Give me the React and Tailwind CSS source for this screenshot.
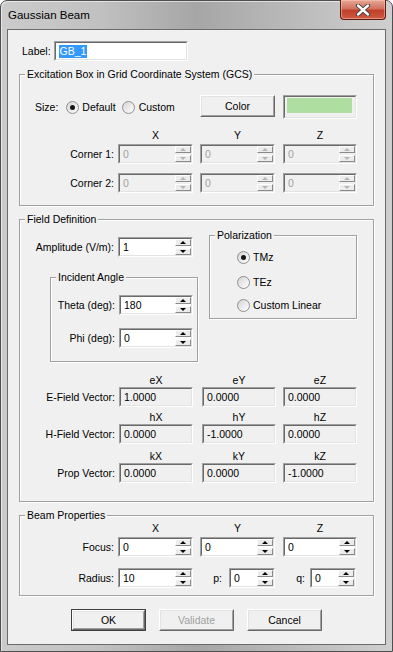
const outerSunk = 'border border-t-[#a0a0a0] border-l-[#a0a0a0] border-r-white border-b-white';
const innerSunk = 'border border-t-[#696969] border-l-[#696969] border-r-[#e3e3e3] border-b-[#e3e3e3]';
const raisedOuter = 'border border-t-white border-l-white border-r-[#696969] border-b-[#696969]';
const raisedInner = 'border border-t-[#e3e3e3] border-l-[#e3e3e3] border-r-[#a0a0a0] border-b-[#a0a0a0]';

function SpinBtns({ dim }) {
  return (
    <div className="flex flex-col gap-[2px] self-stretch justify-center">
      <div className="w-[16px] h-[7px] flex items-center justify-center bg-[#ececec] border border-t-white border-l-white border-r-[#8a8a8a] border-b-[#8a8a8a]">
        <span className={`w-0 h-0 border-x-[3px] border-x-transparent border-b-[3px] ${dim ? 'border-b-[#b5b5b5]' : 'border-b-black'}`} />
      </div>
      <div className="w-[16px] h-[7px] flex items-center justify-center bg-[#ececec] border border-t-white border-l-white border-r-[#8a8a8a] border-b-[#8a8a8a]">
        <span className={`w-0 h-0 border-x-[3px] border-x-transparent border-t-[3px] ${dim ? 'border-t-[#b5b5b5]' : 'border-t-black'}`} />
      </div>
    </div>
  );
}

function Field({ value, className = '', bg = 'bg-white', dim, spin }) {
  return (
    <div className={`h-[20px] shrink-0 ${outerSunk} ${className}`}>
      <div className={`h-full flex items-center ${innerSunk} ${bg}`}>
        <span className={`flex-1 pl-[3px] whitespace-nowrap ${dim ? 'text-[#a0a0a0]' : ''}`}>{value}</span>
        {spin && <SpinBtns dim={dim} />}
      </div>
    </div>
  );
}

function Radio({ checked, className = '' }) {
  return (
    <span className={`w-[13px] h-[13px] shrink-0 rounded-full border border-[#8f8f8f] bg-[linear-gradient(135deg,#d4d4d4,#ffffff)] flex items-center justify-center ${className}`}>
      {checked && <span className="w-[5px] h-[5px] rounded-full bg-[#151515]" />}
    </span>
  );
}

function Btn({ children, def, disabled, className = '' }) {
  return (
    <div className={`w-[75px] h-[22px] shrink-0 ${def ? 'border border-[#404040]' : ''} ${className}`}>
      <div className={`h-full ${raisedOuter}`}>
        <div className={`h-full flex items-center justify-center bg-[#f0f0f0] ${raisedInner} ${disabled ? 'text-[#a0a0a0]' : ''}`}>
          {children}
        </div>
      </div>
    </div>
  );
}

function Group({ title, className = '', children }) {
  return (
    <fieldset className={`border border-[#a0a0a0] shadow-[inset_1px_1px_0_#fff,1px_1px_0_#fff] ${className}`}>
      <legend className="ml-[5px] px-[2px] bg-[#f0f0f0] leading-[13px]">{title}</legend>
      {children}
    </fieldset>
  );
}

function Row({ label, className = '', children, w = 'w-[98px]' }) {
  return (
    <div className={`flex items-center h-[20px] ${className}`}>
      <span className={`${w} text-right pr-[4px] whitespace-nowrap`}>{label}</span>
      {children}
    </div>
  );
}

function Heads({ labels, vector, className = '' }) {
  const cols = vector
    ? ['w-[74px]', 'ml-[9px] w-[74px]', 'ml-[7px] w-[74px]']
    : ['w-[75px]', 'ml-[7px] w-[75px]', 'ml-[8px] w-[74px]'];
  return (
    <div className={`flex h-[13px] ${className}`}>
      <div className={vector ? 'w-[99px]' : 'w-[98px]'} />
      {labels.map((l, i) => (
        <div key={l} className={`${cols[i]} text-center`}>{l}</div>
      ))}
    </div>
  );
}

function VecRow({ label, values }) {
  return (
    <Row label={label} w="w-[99px]">
      <Field value={values[0]} bg="bg-[#f0f0f0]" className="w-[74px]" />
      <Field value={values[1]} bg="bg-[#f0f0f0]" className="ml-[9px] w-[74px]" />
      <Field value={values[2]} bg="bg-[#f0f0f0]" className="ml-[7px] w-[74px]" />
    </Row>
  );
}

function CloseBtn() {
  return (
    <div className="ml-auto mr-[6px] -mt-px w-[46px] h-[20px] rounded-b-[4px] border border-t-0 border-[#5a1d14] bg-[linear-gradient(180deg,#e7a897_0%,#d2725f_45%,#c0402b_55%,#cf5a40_100%)] shadow-[inset_0_0_0_1px_rgba(255,200,190,0.5)] flex items-center justify-center">
      <svg width="16" height="12" viewBox="0 0 16 12">
        <path d="M3 1.5 L13 10.5 M13 1.5 L3 10.5" stroke="#3a3a3a" strokeWidth="4.2" strokeLinecap="round" />
        <path d="M3 1.5 L13 10.5 M13 1.5 L3 10.5" stroke="#ffffff" strokeWidth="2.4" strokeLinecap="round" />
      </svg>
    </div>
  );
}

export default function App() {
  return (
    <div className="w-[393px] h-[652px] overflow-hidden font-['Liberation_Sans',Arial,sans-serif] text-[10.5px] leading-[13px] text-black">
      <div className="h-full flex flex-col rounded-t-[7px] border border-[#4f4f4f] bg-[linear-gradient(90deg,#cbcbcb_0%,#c1c1c1_25%,#a6a6a6_50%,#b8b8b8_72%,#cfcfcf_100%)] shadow-[inset_1px_1px_0_rgba(255,255,255,0.55)]">
        <div className="h-[28px] flex items-start shrink-0">
          <span className="pl-[7px] pt-[7px] text-[11.5px] leading-[14px]">Gaussian Beam</span>
          <CloseBtn />
        </div>

        <div className="flex-1 mx-[6px] mb-[6px] border border-[#6b6b6b] bg-[#f0f0f0] pt-[11px] pl-[11px] flex flex-col">
          <div className="flex items-center h-[20px] ml-[3px]">
            <span>Label:</span>
            <div className={`ml-[3px] w-[134px] h-[20px] ${outerSunk}`}>
              <div className={`h-full flex items-center bg-white ${innerSunk}`}>
                <span className="ml-[3px] bg-[#3399ff] text-white px-px">GB_1</span>
              </div>
            </div>
          </div>

          <Group title="Excitation Box in Grid Coordinate System (GCS)" className="mt-[7px] w-[355px] pb-[12px]">
            <div className="flex items-start mt-[14px]">
              <div className="w-[180px] h-[24px] flex items-center pl-[15px]">
                <span>Size:</span>
                <Radio checked className="ml-[8px]" />
                <span className="ml-[3px]">Default</span>
                <Radio className="ml-[6px]" />
                <span className="ml-[4px]">Custom</span>
              </div>
              <Btn>Color</Btn>
              <div className={`ml-[8px] w-[74px] h-[24px] ${outerSunk}`}>
                <div className={`h-full pt-px pl-[2px] pr-[3px] pb-[4px] ${innerSunk}`}>
                  <div className="w-full h-full bg-[#aedfa0]" />
                </div>
              </div>
            </div>
            <Heads labels={['X', 'Y', 'Z']} className="mt-[10px]" />
            <Row label="Corner 1:" className="mt-[2px]">
              <Field value="0" dim spin bg="bg-[#f0f0f0]" className="w-[75px]" />
              <Field value="0" dim spin bg="bg-[#f0f0f0]" className="ml-[7px] w-[75px]" />
              <Field value="0" dim spin bg="bg-[#f0f0f0]" className="ml-[8px] w-[74px]" />
            </Row>
            <Row label="Corner 2:" className="mt-[9px]">
              <Field value="0" dim spin bg="bg-[#f0f0f0]" className="w-[75px]" />
              <Field value="0" dim spin bg="bg-[#f0f0f0]" className="ml-[7px] w-[75px]" />
              <Field value="0" dim spin bg="bg-[#f0f0f0]" className="ml-[8px] w-[74px]" />
            </Row>
          </Group>

          <Group title="Field Definition" className="mt-[7px] w-[355px] pb-[18px]">
            <div className="flex items-start">
              <div className="w-[178px] shrink-0">
                <Row label="Amplitude (V/m):" className="mt-[11px]">
                  <Field value="1" spin className="w-[75px]" />
                </Row>
                <Group title="Incident Angle" className="ml-[30px] mt-[14px] w-[148px] pb-[13px]">
                  <Row label="Theta (deg):" w="w-[68px]" className="mt-[11px]">
                    <Field value="180" spin className="w-[74px]" />
                  </Row>
                  <Row label="Phi (deg):" w="w-[68px]" className="mt-[13px]">
                    <Field value="0" spin className="w-[74px]" />
                  </Row>
                </Group>
              </div>
              <Group title="Polarization" className="ml-[11px] mt-[3px] w-[148px] pb-[6px]">
                <div className="flex items-center h-[14px] mt-[8px] pl-[27px]">
                  <Radio checked />
                  <span className="ml-[3px]">TMz</span>
                </div>
                <div className="flex items-center h-[14px] mt-[11px] pl-[27px]">
                  <Radio />
                  <span className="ml-[3px]">TEz</span>
                </div>
                <div className="flex items-center h-[14px] mt-[9px] pl-[27px]">
                  <Radio />
                  <span className="ml-[3px]">Custom Linear</span>
                </div>
              </Group>
            </div>

            <Heads labels={['eX', 'eY', 'eZ']} vector className="mt-[12px]" />
            <VecRow label="E-Field Vector:" values={['1.0000', '0.0000', '0.0000']} />
            <Heads labels={['hX', 'hY', 'hZ']} vector className="mt-[4px]" />
            <VecRow label="H-Field Vector:" values={['0.0000', '-1.0000', '0.0000']} />
            <Heads labels={['kX', 'kY', 'kZ']} vector className="mt-[6px]" />
            <VecRow label="Prop Vector:" values={['0.0000', '0.0000', '-1.0000']} />
          </Group>

          <Group title="Beam Properties" className="mt-[7px] w-[355px] pb-[7px]">
            <Heads labels={['X', 'Y', 'Z']} />
            <Row label="Focus:" className="mt-[2px]">
              <Field value="0" spin className="w-[75px]" />
              <Field value="0" spin className="ml-[7px] w-[75px]" />
              <Field value="0" spin className="ml-[8px] w-[74px]" />
            </Row>
            <Row label="Radius:" className="mt-[11px]">
              <Field value="10" spin className="w-[75px]" />
              <span className="w-[36px] text-right pr-[7px]">p:</span>
              <Field value="0" spin className="w-[46px]" />
              <span className="w-[35px] text-right pr-[5px]">q:</span>
              <Field value="0" spin className="w-[46px]" />
            </Row>
          </Group>

          <div className="flex justify-center gap-[13px] mt-[13px] pr-[11px]">
            <Btn def>OK</Btn>
            <Btn disabled>Validate</Btn>
            <Btn>Cancel</Btn>
          </div>
        </div>
      </div>
    </div>
  );
}
